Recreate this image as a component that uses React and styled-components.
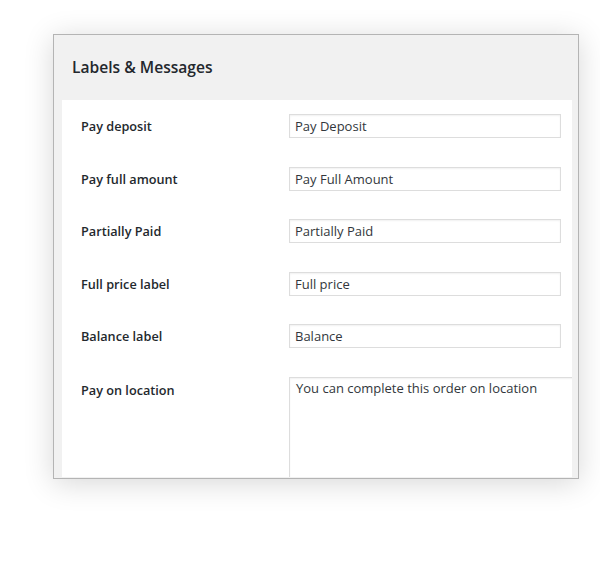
import React from "react";
import styled, { createGlobalStyle } from "styled-components";

const Global = createGlobalStyle`
  html, body { margin: 0; padding: 0; background: #ffffff; }
  body { font-family: "Open Sans", "Noto Sans", sans-serif; }
  * { box-sizing: border-box; }
`;

const Page = styled.div`
  width: 600px;
  height: 566px;
  padding: 34px 0 0 53px;
`;

const Frame = styled.section`
  width: 526px;
  height: 445px;
  background: #f1f1f1;
  border: 1px solid #b4b4b4;
  box-shadow: 0 4px 28px rgba(0, 0, 0, 0.16);
  display: flex;
  flex-direction: column;
`;

const Header = styled.header`
  height: 65px;
  flex: none;
  display: flex;
  align-items: center;
  padding: 0 0 2px 18px;
`;

const Title = styled.h2`
  margin: 0;
  font-size: 15.6px;
  font-weight: 600;
  color: #23282d;
  letter-spacing: 0;
`;

const Panel = styled.div`
  flex: 1;
  margin: 0 6px 1px 8px;
  background: #ffffff;
  overflow: hidden;
  padding: 14px 0 0 19px;
  display: flex;
  flex-direction: column;
  gap: 28.6px;
`;

const Row = styled.div`
  display: grid;
  grid-template-columns: 208px 1fr;
  align-items: ${(p) => (p.$top ? "start" : "center")};
`;

const Label = styled.label`
  font-size: 12.7px;
  font-weight: 600;
  color: #23282d;
  line-height: ${(p) => (p.$top ? "26px" : "18px")};
`;

const Input = styled.input`
  width: 272px;
  height: 24px;
  margin: 0;
  border: 1px solid #dddddd;
  box-shadow: inset 0 1px 2px rgba(0, 0, 0, 0.06);
  padding: 0 5px;
  font-family: "Open Sans", "Noto Sans", sans-serif;
  font-size: 13px;
  color: #32373c;
  background: #fff;
  outline: none;
`;

const TextArea = styled.textarea`
  width: 300px;
  height: 130px;
  margin: 0;
  border: 1px solid #dddddd;
  box-shadow: inset 0 1px 2px rgba(0, 0, 0, 0.06);
  padding: 1px 6px;
  font-family: "Open Sans", "Noto Sans", sans-serif;
  font-size: 13px;
  line-height: 18px;
  color: #32373c;
  background: #fff;
  resize: none;
  outline: none;
`;

const fields = [
  ["Pay deposit", "Pay Deposit"],
  ["Pay full amount", "Pay Full Amount"],
  ["Partially Paid", "Partially Paid"],
  ["Full price label", "Full price"],
  ["Balance label", "Balance"],
];

export default function App() {
  return (
    <>
      <Global />
      <Page>
        <Frame>
          <Header>
            <Title>Labels &amp; Messages</Title>
          </Header>
          <Panel>
            {fields.map(([label, value]) => (
              <Row key={label}>
                <Label>{label}</Label>
                <Input defaultValue={value} />
              </Row>
            ))}
            <Row $top>
              <Label $top>Pay on location</Label>
              <TextArea defaultValue="You can complete this order on location" />
            </Row>
          </Panel>
        </Frame>
      </Page>
    </>
  );
}
